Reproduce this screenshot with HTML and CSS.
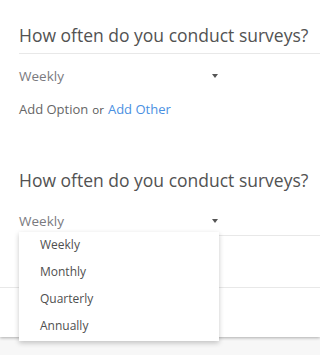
FILE: index.html
```html
<!DOCTYPE html>
<html>
<head>
<meta charset="utf-8">
<link rel="stylesheet" href="styles.css">
</head>
<body>
<div class="page">
  <div class="card">
    <section class="question first">
      <h2 class="title ruled">How often do you conduct surveys?</h2>
      <div class="select">
        <span class="value">Weekly</span>
        <span class="caret"></span>
      </div>
      <div class="add-row">
        <span class="add">Add Option</span>
        <span class="or">or</span>
        <span class="link">Add Other</span>
      </div>
    </section>
    <section class="question second">
      <h2 class="title">How often do you conduct surveys?</h2>
      <div class="select-wrap">
        <div class="select">
          <span class="value">Weekly</span>
          <span class="caret"></span>
        </div>
        <ul class="menu">
          <li>Weekly</li>
          <li>Monthly</li>
          <li>Quarterly</li>
          <li>Annually</li>
        </ul>
      </div>
    </section>
    <div class="divider"></div>
  </div>
</div>
</body>
</html>
```
FILE: styles.css
```css
* { box-sizing: border-box; }
html, body { margin: 0; padding: 0; }
html { background: #f7f7f7; }
body {
  min-height: 355px;
  font-family: "Open Sans", "Noto Sans", sans-serif;
  color: #555;
}
.page { height: 355px; }
.card {
  position: relative;
  background: #fff;
  box-shadow: 0 1px 3px rgba(0,0,0,0.3);
  padding-bottom: 49px;
}
.question { padding-left: 19px; }
.first { padding-top: 23px; }
.title {
  margin: 0;
  font-weight: 400;
  font-size: 17.5px;
  line-height: 24px;
  height: 24px;
  color: #525252;
  white-space: nowrap;
}
.title.ruled {
  height: 31px;
  padding-bottom: 6px;
  border-bottom: 1px solid #e8e8e8;
}
.select {
  display: flex;
  align-items: center;
  justify-content: space-between;
  width: 200px;
  height: 26px;
  margin-top: 9px;
  font-size: 13.5px;
  color: #7a7a80;
}
.caret {
  width: 0; height: 0;
  border-left: 3.5px solid transparent;
  border-right: 3.5px solid transparent;
  border-top: 4px solid #555;
  margin-right: 1px;
}
.add-row {
  margin-top: 10px;
  height: 20px;
  line-height: 20px;
  font-size: 13px;
  color: #666;
  display: flex;
  align-items: baseline;
  gap: 4px;
}
.add-row .or { font-size: 11.5px; color: #555; }
.add-row .link { color: #4a90e2; }
.second { padding-top: 49px; }
.select-wrap {
  position: relative;
  border-bottom: 1px solid #e8e8e8;
  padding-bottom: 1px;
}
.second .select { margin-top: 16px; }
.menu {
  position: absolute;
  left: 0;
  top: 24px;
  width: 200px;
  margin: 0;
  padding: 0 0 1px;
  list-style: none;
  background: #fff;
  box-shadow: 0 2px 5px rgba(0,0,0,0.22);
  z-index: 5;
}
.menu li {
  height: 27px;
  line-height: 26px;
  padding-left: 21px;
  font-size: 12px;
  color: #4f4f4f;
}
.divider {
  margin-top: 51px;
  border-top: 1px solid #e8e8e8;
}
```
